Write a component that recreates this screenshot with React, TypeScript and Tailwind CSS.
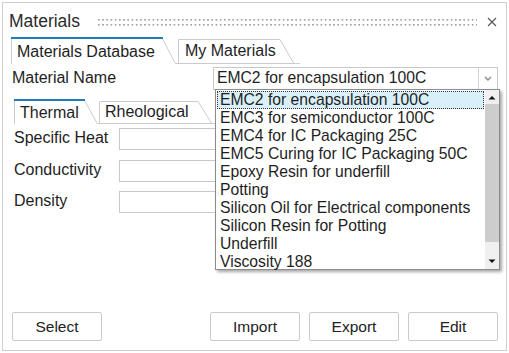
import React from 'react'

const items = [
  'EMC2 for encapsulation 100C',
  'EMC3 for semiconductor 100C',
  'EMC4 for IC Packaging 25C',
  'EMC5 Curing for IC Packaging 50C',
  'Epoxy Resin for underfill',
  'Potting',
  'Silicon Oil for Electrical components',
  'Silicon Resin for Potting',
  'Underfill',
  'Viscosity 188',
]

function Tab({ label, w, h, active, className }: { label: string; w: number; h: number; active?: boolean; className: string }) {
  return (
    <div className={`relative flex items-center ${className}`}>
      <svg width={w} height={h} className="absolute left-0 top-0">
        <path d={`M0.5 ${h} V0.5 H${w - 14} L${w - 0.5} ${h}`} fill="white" stroke="#cbcbcb" />
        {active && <rect x={0} y={0} width={w - 13} height={2} fill="#1f7fb5" />}
      </svg>
      <span className="relative">{label}</span>
    </div>
  )
}

function Field({ label }: { label: string }) {
  return (
    <div className="flex items-center h-[22px]">
      <div className="w-[105px] -mt-[2px]">{label}</div>
      <div className="h-[22px] w-[140px] border border-[#c8c8c8] bg-white" />
    </div>
  )
}

function Btn({ label }: { label: string }) {
  return (
    <button className="h-[29px] w-[90px] border border-[#cacaca] rounded-[2px] bg-white text-[15.5px] text-[#222]">
      {label}
    </button>
  )
}

export default function App() {
  return (
    <div className="relative w-[509px] h-[353px] bg-white p-[2px] font-['Liberation_Sans',Arial,sans-serif] text-[16px] text-[#1e1e1e]">
      <div className="h-full border border-[#cfcfcf] flex flex-col">
        {/* title bar */}
        <div className="h-[34px] flex items-center pt-[3px] pl-[6px] pr-[9px]">
          <span className="text-[17.5px] text-[#2b2b2b]">Materials</span>
          <svg className="ml-[18px] flex-1 h-[8px]">
            <defs>
              <pattern id="grip" width="4.2" height="5" patternUnits="userSpaceOnUse">
                <rect x="0" y="1" width="1.6" height="1.6" fill="#9c9c9c" />
              </pattern>
            </defs>
            <rect x="0" y="0" width="100%" height="8" fill="url(#grip)" />
          </svg>
          <svg width="10" height="10" viewBox="0 0 10 10" className="ml-[10px]">
            <path d="M1 1 L9 9 M9 1 L1 9" stroke="#555" strokeWidth="1.1" />
          </svg>
        </div>

        {/* outer tabs */}
        <div className="flex items-end pl-[8px] h-[27px]">
          <Tab label="Materials Database" w={165} h={27} active className="w-[165px] h-[27px] pl-[6px] pt-[2px]" />
          <div className="flex border-b border-[#cbcbcb] h-[25px] pl-[2px] pr-[6px]">
            <Tab label="My Materials" w={116} h={24} className="w-[116px] h-[24px] pl-[7px]" />
          </div>
        </div>

        {/* material name */}
        <div className="flex items-center mt-[2px] pl-[9px] pr-[8px]">
          <div className="w-[201px]">Material Name</div>
          <div className="flex-1 h-[23px] border border-[#c8c8c8] flex items-center">
            <span className="flex-1 pl-[3px] text-[15.7px]">EMC2 for encapsulation 100C</span>
            <div className="w-[19px] h-full border-l border-[#d4d4d4] flex items-center justify-center">
              <svg width="8" height="5" viewBox="0 0 8 5">
                <path d="M1 1 L4 4 L7 1" stroke="#8a8a8a" strokeWidth="1.4" fill="none" />
              </svg>
            </div>
          </div>
        </div>

        {/* inner tabs */}
        <div className="flex items-end mt-[9px] pl-[11px] h-[25px]">
          <Tab label="Thermal" w={84} h={25} active className="w-[84px] h-[25px] pl-[6px] pt-[2px]" />
          <div className="flex border-b border-[#cbcbcb] h-[23px] pl-[1px] pr-[10px]">
            <Tab label="Rheological" w={113} h={22} className="w-[113px] h-[22px] pl-[6px]" />
          </div>
        </div>

        {/* fields */}
        <div className="flex flex-col gap-[9.5px] mt-[4px] pl-[11px]">
          <Field label="Specific Heat" />
          <Field label="Conductivity" />
          <Field label="Density" />
        </div>

        {/* buttons */}
        <div className="mt-auto flex items-center pl-[9px] pr-[8px] pb-[9px]">
          <Btn label="Select" />
          <div className="flex-1" />
          <div className="flex gap-[9px]">
            <Btn label="Import" />
            <Btn label="Export" />
            <Btn label="Edit" />
          </div>
        </div>
      </div>

      {/* open dropdown list */}
      <div className="absolute left-[215px] top-[89px] w-[285px] h-[181px] bg-white border border-[#8c8c8c] shadow-[2px_2px_3px_rgba(0,0,0,0.35)] flex">
        <div className="flex-1 flex flex-col pt-[1px] pl-[1px] pr-[1px] text-[15.7px]">
          {items.map((it, i) => (
            <div
              key={it}
              className={`h-[18px] leading-[16px] pl-[2px] ${i === 0 ? 'bg-[#d9f0fb] border border-dotted border-[#333]' : 'border border-transparent'}`}
            >
              {it}
            </div>
          ))}
        </div>
        <div className="w-[14px] flex flex-col bg-[#f0f0f0]">
          <div className="h-[14px] flex items-center justify-center">
            <svg width="8" height="5" viewBox="0 0 8 5">
              <path d="M0.5 4.5 L4 1 L7.5 4.5 Z" fill="#111" />
            </svg>
          </div>
          <div className="h-[138px] bg-[#cdcdcd]" />
          <div className="flex-1" />
          <div className="h-[16px] flex items-center justify-center">
            <svg width="8" height="5" viewBox="0 0 8 5">
              <path d="M0.5 0.5 L4 4 L7.5 0.5 Z" fill="#111" />
            </svg>
          </div>
        </div>
      </div>
    </div>
  )
}
